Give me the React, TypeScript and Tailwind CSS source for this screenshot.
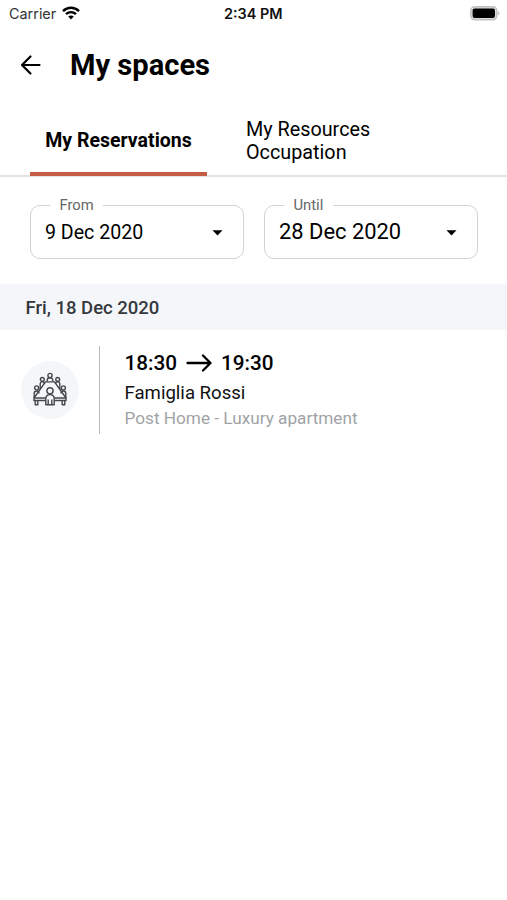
import React from 'react';

type DateFieldProps = {
  label: string;
  value: string;
  valueClass: string;
};

function StatusBar() {
  return (
    <div className="flex h-7 items-center pl-[9px] pr-[7px] font-['Inter',sans-serif] text-[14.4px] leading-none">
      <div className="flex flex-1 items-center gap-[6px]">
        <span className="w-[47px] whitespace-nowrap text-[#333]">Carrier</span>
        <svg className="-mt-0.5" width="18" height="14" viewBox="0 0 18 14" fill="none" stroke="#000" strokeWidth="2.5">
          <path d="M1 5.1C5.6.7 12.4.7 17 5.1" />
          <path d="M4 8.2c2.9-2.7 7.1-2.7 10 0" />
          <path d="M9 13.4 6.2 10.6c1.6-1.4 4-1.4 5.6 0z" fill="#000" stroke="none" />
        </svg>
      </div>
      <span className="w-[61px] whitespace-nowrap font-semibold text-[#111]">2:34 PM</span>
      <div className="flex flex-1 justify-end">
        <svg className="-mt-0.5" width="30" height="15" viewBox="0 0 30 15">
          <rect x=".8" y=".8" width="26" height="13" rx="4" fill="#ddd" stroke="#c0c0c0" strokeWidth="1.5" />
          <rect x="2.6" y="2.6" width="22.4" height="9.4" rx="2" fill="#000" />
          <path d="M28.2 5.2c1.6.7 1.6 3.5 0 4.2z" fill="#b4b4b4" />
        </svg>
      </div>
    </div>
  );
}

function Header() {
  return (
    <header className="flex h-[74px] items-center pl-5">
      <svg className="-mt-px" width="22" height="22" viewBox="0 0 22 22" fill="none" stroke="#000" strokeWidth="2.2" strokeLinecap="round" strokeLinejoin="round">
        <path d="M19.5 11H2M10.5 2.5 2 11l8.5 8.5" />
      </svg>
      <h1 className="ml-7 text-[29.1px] font-bold leading-[30px]">My spaces</h1>
    </header>
  );
}

function Tabs() {
  return (
    <nav className="flex h-[75px] border-b-2 border-[#e4e4e4] pl-[30px] text-black">
      <button className="-mb-px flex w-[177px] items-center justify-center whitespace-nowrap border-b-4 border-[#c75c45] pt-[8px] text-[19.5px] font-bold">
        My Reservations
      </button>
      <button className="ml-[39px] flex w-[160px] items-center pt-[5px] text-left text-[19.8px] leading-[23px]">
        My Resources Occupation
      </button>
    </nav>
  );
}

function DateField({ label, value, valueClass }: DateFieldProps) {
  return (
    <fieldset className="h-[62px] w-[214px] rounded-[10px] border border-[#d2d2d2]">
      <legend className="ml-[19px] h-4 whitespace-nowrap px-[9.5px] text-[14.8px] leading-[17px] text-[#666]">
        {label}
      </legend>
      <div className="flex h-[38px] items-center justify-between pl-[14px] pr-[20.5px]">
        <span className={`whitespace-nowrap ${valueClass}`}>{value}</span>
        <svg className="mt-px" width="11" height="6" viewBox="0 0 11 6">
          <path d="M.5.3h10L5.5 5.6z" fill="#000" />
        </svg>
      </div>
    </fieldset>
  );
}

// Table with a host in front and guests seated along both sides
function MeetingIcon() {
  return (
    <svg width="34" height="36" viewBox="0 0 34 36" fill="none" stroke="#43474c" strokeWidth="1.4" strokeLinejoin="round">
      <circle cx="17" cy="3.5" r="2.1" />
      <path d="M14.2 9.5V8c0-3.1 5.6-3.1 5.6 0v1.5" />
      <circle cx="9.3" cy="7.4" r="1.9" />
      <path d="M7.2 17.5V12c0-2.8 4.3-2.8 4.3 0" />
      <circle cx="24.7" cy="7.4" r="1.9" />
      <path d="M26.8 17.5V12c0-2.8-4.3-2.8-4.3 0" />
      <circle cx="3.6" cy="15.9" r="2" />
      <path d="M1.2 26v-4.6c0-3.2 4.8-3.2 4.8 0" />
      <circle cx="30.4" cy="15.9" r="2" />
      <path d="M32.8 26v-4.6c0-3.2-4.8-3.2-4.8 0" />
      <path d="M12.8 28.5H1V26L12.5 9.9h9L33 26v2.5H21.2" />
      <path d="M1 26h11.8M21.2 26H33" />
      <path d="M2.2 28.5v4.3h2.6v-4.3M29.2 28.5v4.3h2.6v-4.3" />
      <circle cx="17" cy="18.8" r="3.1" />
      <path d="M12.8 32.8V27c0-5.8 8.4-5.8 8.4 0v5.8zM15.2 27.5v5.3M18.8 27.5v5.3" />
    </svg>
  );
}

function Reservation() {
  return (
    <div className="flex pl-[21px] pt-4">
      <div className="mt-[15px] flex size-[58px] items-center justify-center rounded-full bg-[#f4f7fa]">
        <MeetingIcon />
      </div>
      <div className="ml-5 h-[88px] w-px bg-[#bcbcbc]" />
      <div className="ml-[24.5px] whitespace-nowrap">
        <div className="flex h-[33px] items-center text-[20.7px] font-medium leading-[22px] text-black">
          <span className="w-[52px]">18:30</span>
          <svg className="ml-[9px] mr-[9.5px]" width="26" height="20" viewBox="0 0 26 20" fill="none" stroke="#000" strokeWidth="2.3" strokeLinecap="round" strokeLinejoin="round">
            <path d="M1.5 10h23M17 2.5l7.5 7.5-7.5 7.5" />
          </svg>
          <span>19:30</span>
        </div>
        <div className="flex h-[29px] items-center text-[18.6px] text-[#111]">Famiglia Rossi</div>
        <div className="flex h-[22px] items-center text-[17.2px] text-[#a0a3a6]">Post Home - Luxury apartment</div>
      </div>
    </div>
  );
}

function App() {
  return (
    <div className="min-h-screen bg-white font-['Roboto',sans-serif] text-black">
      <StatusBar />
      <Header />
      <Tabs />
      <div className="flex gap-5 pl-[30px] pt-5">
        <DateField label="From" value="9 Dec 2020" valueClass="pt-px text-[19.6px] leading-[21px]" />
        <DateField label="Until" value="28 Dec 2020" valueClass="text-[21.9px] leading-[22px]" />
      </div>
      <div className="mt-[25px] flex h-[46px] items-center bg-[#f4f6f9] pl-[25.5px] pt-[3px] text-[18.5px] font-medium text-[#34383c]">
        Fri, 18 Dec 2020
      </div>
      <Reservation />
    </div>
  );
}

export default App;
